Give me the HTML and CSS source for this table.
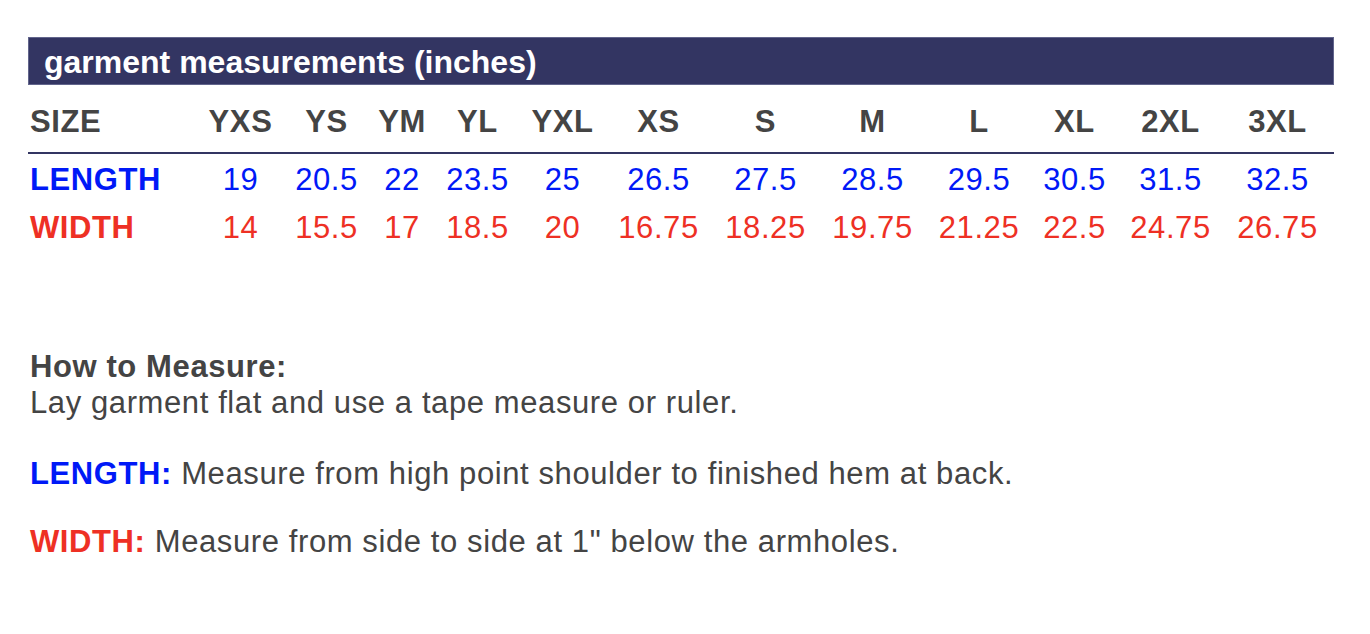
FILE: index.html
```html
<!DOCTYPE html>
<html lang="en">
<head>
<meta charset="utf-8">
<title>Garment measurements</title>
<link rel="stylesheet" href="styles.css">
</head>
<body>
<div class="page">
  <div class="banner">garment measurements (inches)</div>
  <table class="chart">
    <colgroup>
      <col class="c-label">
      <col class="c87"><col class="c85"><col class="c66"><col class="c85"><col class="c85">
      <col class="c107"><col class="c107"><col class="c107"><col class="c106"><col class="c85">
      <col class="c107"><col class="c107">
    </colgroup>
    <thead>
      <tr>
        <th class="label">SIZE</th>
        <th>YXS</th><th>YS</th><th>YM</th><th>YL</th><th>YXL</th>
        <th>XS</th><th>S</th><th>M</th><th>L</th><th>XL</th><th>2XL</th><th>3XL</th>
      </tr>
    </thead>
    <tbody>
      <tr class="len">
        <th class="label">LENGTH</th>
        <td>19</td><td>20.5</td><td>22</td><td>23.5</td><td>25</td>
        <td>26.5</td><td>27.5</td><td>28.5</td><td>29.5</td><td>30.5</td><td>31.5</td><td>32.5</td>
      </tr>
      <tr class="wid">
        <th class="label">WIDTH</th>
        <td>14</td><td>15.5</td><td>17</td><td>18.5</td><td>20</td>
        <td>16.75</td><td>18.25</td><td>19.75</td><td>21.25</td><td>22.5</td><td>24.75</td><td>26.75</td>
      </tr>
    </tbody>
  </table>
  <div class="howto">
    <p class="intro"><strong>How to Measure:</strong><br>Lay garment flat and use a tape measure or ruler.</p>
    <p class="step step-len"><strong class="blue">LENGTH:</strong> Measure from high point shoulder to finished hem at back.</p>
    <p class="step step-wid"><strong class="red">WIDTH:</strong> Measure from side to side at 1" below the armholes.</p>
  </div>
</div>
</body>
</html>
```

FILE: styles.css
```css
html, body {
  margin: 0;
  padding: 0;
  background: #ffffff;
}

body {
  font-family: "Liberation Sans", Arial, Helvetica, sans-serif;
  color: #444444;
}

.page {
  width: 1306px;
  padding: 37px 0 0 28px;
}

.banner {
  background: #333562;
  border: 1px solid #62658c;
  height: 44px;
  padding: 2px 0 0 15px;
  line-height: 44px;
  font-size: 32px;
  font-weight: bold;
  color: #ffffff;
  white-space: nowrap;
}

.chart {
  width: 1306px;
  table-layout: fixed;
  border-collapse: collapse;
  border-spacing: 0;
  font-size: 31px;
  letter-spacing: 0.6px;
  line-height: 36px;
}

.c-label { width: 172px; }
.c66 { width: 66px; }
.c85 { width: 85px; }
.c87 { width: 87px; }
.c106 { width: 106px; }
.c107 { width: 107px; }

.chart th,
.chart td {
  text-align: center;
  padding: 0 6px 0 0;
  white-space: nowrap;
  font-weight: normal;
}

.chart thead th {
  font-weight: bold;
  color: #444444;
  padding-top: 19px;
  padding-bottom: 12px;
  border-bottom: 2px solid #333562;
}

.chart tbody th,
.chart tbody td {
  padding-top: 8px;
  padding-bottom: 4px;
}

.chart .label {
  text-align: left;
  padding-left: 2px;
  padding-right: 0;
  font-weight: bold;
}

.len th, .len td { color: #0019f7; }
.wid th, .wid td { color: #ee3024; }

.howto {
  margin-top: 99px;
  padding-left: 2px;
  font-size: 31px;
  letter-spacing: 0.6px;
  line-height: 36px;
  color: #444444;
}

.howto p {
  margin: 0;
}

.howto strong {
  font-weight: bold;
}

.howto .step-len { margin-top: 35px; }
.howto .step-wid { margin-top: 32px; }

.blue { color: #0019f7; }
.red { color: #ee3024; }
```
